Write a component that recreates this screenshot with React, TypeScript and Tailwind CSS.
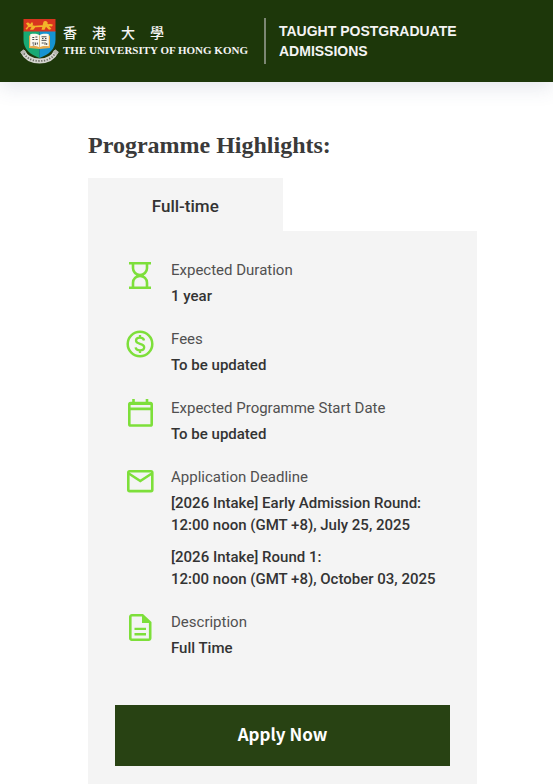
import type { ReactNode } from "react";

const Crest = () => (
  <svg viewBox="0 0 40 46" className="h-[46px] w-10 shrink-0" aria-hidden="true">
    <path d="M3.5 1h32v13h-32z" fill="#d9351f" />
    <path d="M3.5 13.500H19.500V40C10 36.500 3.500 31 3.500 22z" fill="#19a974" />
    <path d="M19.500 13.500h16V22c0 9-6.500 14.500-16 18z" fill="#1593d2" />
    <path
      d="M6 5.500c2-2 3.500-.5 4 .8l2-2.300c1.500 1 1 3 .4 3.600 4 .4 7-.4 10-.2 1-2 .5-4 2.500-4.400 2 0 3.500 1.400 2.500 3 1.800.5 3.600-.5 5.600.8l-1 1.700-3-.4 2.500 3-2.500.6-3-3-1.500 3h-3l.8-2.700-7 .3-2 2.500H10l1.500-3-3 .5L7 11.800l-1.500-1L8 8z"
      fill="#f2b52a"
    />
    <path d="M9 17.500l10.500 1 10.500-1V30l-10.500 1L9 30z" fill="#e6aa4d" />
    <path d="M10.200 16.300c3.500-.8 7-.5 9.300 1 2.300-1.500 5.800-1.800 9.300-1v11.900c-3.500-.6-7-.4-9.300 1.100-2.300-1.500-5.800-1.700-9.300-1.100z" fill="#fbf8ee" />
    <path d="M19.500 17.300v12" stroke="#d6b474" strokeWidth=".9" />
    <path
      d="M12.300 19.500h2M15.400 19h2M12.300 21.500h2M15.600 21.500h2M12.300 25h2M15.400 24.500v2.500M17.300 24.500v2M12.800 27h1.500M21.500 18.800h5M22 20.500h1.500M25 20.500h1.500M21.500 22.300h5M21.700 25h2M25 24.200v2.600M26.700 25v2"
      stroke="#4a4a4a"
      strokeWidth="1"
    />
    <path
      d="M2.500 33C6 40.500 12 43 19.500 43S33 40.500 36.500 33"
      fill="none"
      stroke="#d5d5d0"
      strokeWidth="5"
    />
    <path d="M.5 34l3-2.800 2.500 3.300-3.500 2.500zM38.500 34l-3-2.800-2.500 3.300 3.500 2.500z" fill="#b7b7b1" />
    <path
      d="M4 35.500C7.500 41 13 43 19.500 43S31.500 41 35 35.500"
      fill="none"
      stroke="#6d6d66"
      strokeWidth="1.800"
      strokeDasharray="1.300 1.500"
    />
  </svg>
);

const Icon = ({ children }: { children: ReactNode }) => (
  <svg
    viewBox="0 0 28 28"
    className="mt-0.5 size-7 shrink-0 text-[#7ddf3a]"
    fill="none"
    stroke="currentColor"
    strokeWidth="2.600"
    aria-hidden="true"
  >
    {children}
  </svg>
);

const HourglassIcon = () => (
  <Icon>
    <path d="M3 2.200h22M3 26.700h22" />
    <path d="M7 2.500V7.200a7 6.800 0 0 0 14 0V2.500M7 26.500v-4.800a7 6.800 0 0 1 14 0v4.800" />
  </Icon>
);

const FeesIcon = () => (
  <Icon>
    <circle cx="14" cy="14" r="12.300" strokeWidth="2.500" />
    <path
      d="M18 10.500c-.3-1.800-1.900-2.800-4-2.800-2.300 0-4 1.100-4 2.900 0 1.900 1.600 2.600 4 3.200s4.200 1.400 4.200 3.400-1.900 3.100-4.200 3.100-4.100-1-4.400-3M14 5v2.800M14 20v3"
      strokeWidth="2.300"
    />
  </Icon>
);

const CalendarIcon = () => (
  <Icon>
    <rect x="3.300" y="4" width="22.400" height="22.500" rx="1.300" />
    <path d="M3.500 9.900h22M7.500 0v4M21 0v4" />
    <path d="M3.500 4.500h22" strokeWidth="3" />
  </Icon>
);

const MailIcon = () => (
  <Icon>
    <rect x="2.300" y="3.300" width="24" height="19.800" rx="1.300" />
    <path d="M2.800 5.500L14.300 13l11.500-7.500" />
  </Icon>
);

const DocumentIcon = () => (
  <Icon>
    <path d="M16.500 2.300H6A1.500 1.500 0 0 0 4.300 3.800v21.400A1.500 1.500 0 0 0 6 26.700h16.700a1.500 1.500 0 0 0 1.500-1.500V9.500z" />
    <path d="M16 1.500v8.500h8.800z" fill="currentColor" stroke="none" />
    <path d="M8.500 15.900h11.500M8.500 21.200h11.500" strokeWidth="2.400" />
  </Icon>
);

type HighlightProps = {
  icon: ReactNode;
  label: string;
  children: ReactNode;
};

const Highlight = ({ icon, label, children }: HighlightProps) => (
  <div className="flex gap-[17px]">
    {icon}
    <dl className="flex min-w-0 flex-1 flex-col gap-1 text-[15px] leading-[22px]">
      <dt className="text-[#505050]">{label}</dt>
      <dd className="flex flex-col gap-2.5 font-medium text-[#333]">{children}</dd>
    </dl>
  </div>
);

const Header = () => (
  <header className="flex items-center bg-[#1d370a] px-5 py-[18px] text-[#f4f4f4] shadow-[0_4px_20px_rgba(60,80,120,0.16)]">
    <a href="#" className="flex items-center gap-[3px]">
      <Crest />
      <span className="flex flex-col gap-0.5 whitespace-nowrap">
        <span
          lang="zh-Hant"
          className="flex gap-[15px] font-['Noto_Sans_CJK_TC',sans-serif] text-[14px] leading-4 font-medium"
        >
          <span>香</span>
          <span>港</span>
          <span>大</span>
          <span>學</span>
        </span>
        <span className="font-['Liberation_Serif',serif] text-[11px] leading-4 font-bold">
          THE UNIVERSITY OF HONG KONG
        </span>
      </span>
    </a>
    <a
      href="#"
      className="ml-4 flex h-[46px] items-center border-l-2 border-[#7c8774] pl-[13px] font-['Liberation_Sans',sans-serif] text-[14px] leading-5 font-bold"
    >
      TAUGHT POSTGRADUATE
      <br />
      ADMISSIONS
    </a>
  </header>
);

const App = () => {
  return (
    <div className="min-h-screen bg-white font-['Roboto',sans-serif] text-base">
      <Header />
      <main className="pt-[47px] pr-19 pl-22">
        <h1 className="font-['Liberation_Serif',serif] text-[24px] leading-8 font-bold text-[#3a3a3a]">
          Programme Highlights:
        </h1>
        <div role="tablist" className="mt-[17px] flex">
          <button
            role="tab"
            aria-selected="true"
            className="w-1/2 bg-[#f4f4f4] pt-[18px] pb-3.5 text-[17px] leading-[21px] font-medium text-[#333]"
          >
            Full-time
          </button>
        </div>
        <section role="tabpanel" className="bg-[#f4f4f4] px-[27px] pt-7 pb-5">
          <div className="flex flex-col gap-[21px] pl-[11px]">
            <Highlight icon={<HourglassIcon />} label="Expected Duration">
              <p>1 year</p>
            </Highlight>
            <Highlight icon={<FeesIcon />} label="Fees">
              <p>To be updated</p>
            </Highlight>
            <Highlight icon={<CalendarIcon />} label="Expected Programme Start Date">
              <p>To be updated</p>
            </Highlight>
            <Highlight icon={<MailIcon />} label="Application Deadline">
              <p>
                [2026 Intake] Early Admission Round:
                <br />
                12:00 noon (GMT +8), July 25, 2025
              </p>
              <p>
                [2026 Intake] Round 1:
                <br />
                12:00 noon (GMT +8), October 03, 2025
              </p>
            </Highlight>
            <Highlight icon={<DocumentIcon />} label="Description">
              <p>Full Time</p>
            </Highlight>
          </div>
          <button className="mt-[46px] w-full bg-[#284213] pt-4 pb-5 font-['Noto_Sans_CJK_SC',sans-serif] text-[17px] leading-[25px] font-bold text-white">
            Apply Now
          </button>
        </section>
      </main>
    </div>
  );
};

export default App;
